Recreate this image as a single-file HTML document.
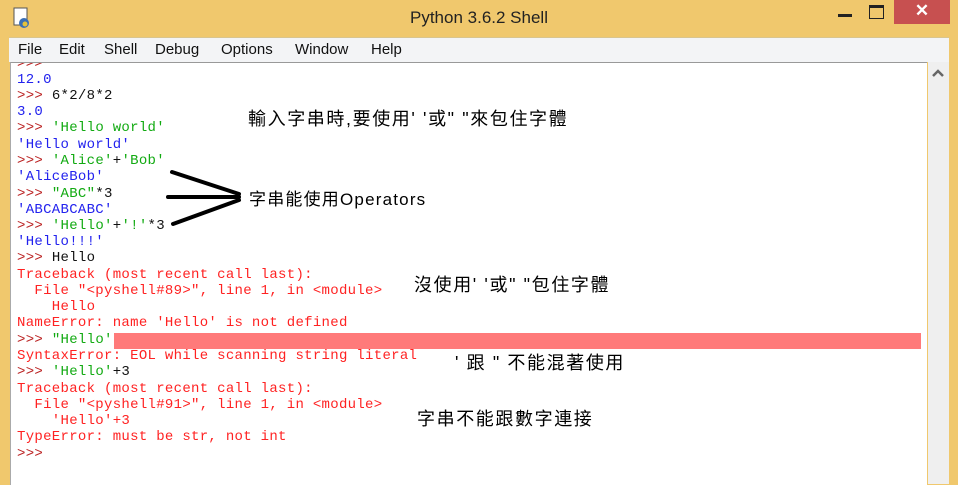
<!DOCTYPE html>
<html><head><meta charset="utf-8"><style>
body{margin:0;width:958px;height:484px;overflow:hidden;background:#F0C86D;position:relative;font-family:"Liberation Sans","Noto Sans CJK TC",sans-serif}
.title{position:absolute;left:0;top:0;width:958px;height:37px;text-align:center;line-height:36px;font-size:17px;color:#222}
.menu{position:absolute;left:9px;top:37px;width:940px;height:24px;background:#F3F4F6;border-top:1px solid #d9c58e}
.menu span{position:absolute;top:3px;font-size:15px;color:#111}
.text{position:absolute;left:10px;top:62px;width:916px;height:422px;background:#fff;border-left:1px solid #aaa;border-top:1px solid #999;overflow:hidden}
.scroll{position:absolute;left:928px;top:62px;width:21px;height:422px;background:#EFEFEF}
.l{position:absolute;left:6px;font-family:"Liberation Mono",monospace;font-size:14px;letter-spacing:0.3px;white-space:pre;line-height:16px}
.p{color:#B22}.b{color:#22E}.g{color:#1A1}.k{color:#111}.r{color:#F22}
.note{position:absolute;font-size:18px;letter-spacing:1.6px;color:#000;white-space:pre;font-family:"Liberation Sans","WenQuanYi Zen Hei",sans-serif}
</style></head><body>
<div class="title">Python 3.6.2 Shell</div>
<svg style="position:absolute;left:12px;top:7px" width="20" height="22"><rect x="2" y="1" width="13" height="17" fill="#fff" stroke="#555"/><circle cx="12" cy="16" r="5" fill="#3a6fb5"/><circle cx="13" cy="17" r="2.5" fill="#e5c33a"/></svg>
<div style="position:absolute;left:838px;top:14px;width:14px;height:3px;background:#222"></div>
<div style="position:absolute;left:869px;top:5px;width:13px;height:10px;border:1px solid #222;border-top:3px solid #222"></div>
<div style="position:absolute;left:894px;top:0;width:56px;height:24px;background:#C75050;color:#fff;text-align:center;font-size:17px;font-weight:bold;line-height:22px">✕</div>
<div class="menu"><span style="left:9px">File</span><span style="left:50px">Edit</span><span style="left:95px">Shell</span><span style="left:146px">Debug</span><span style="left:212px">Options</span><span style="left:286px">Window</span><span style="left:362px">Help</span></div>
<div class="text">
<div class="l p" style="top:-7px">&gt;&gt;&gt;</div>
<div class="l b" style="top:9px">12.0</div>
<div class="l" style="top:25px"><span class="p">&gt;&gt;&gt;</span> <span class="k">6*2/8*2</span></div>
<div class="l b" style="top:41px">3.0</div>
<div class="l" style="top:57px"><span class="p">&gt;&gt;&gt;</span> <span class="g">'Hello world'</span></div>
<div class="l b" style="top:74px">'Hello world'</div>
<div class="l" style="top:90px"><span class="p">&gt;&gt;&gt;</span> <span class="g">'Alice'</span><span class="k">+</span><span class="g">'Bob'</span></div>
<div class="l b" style="top:106px">'AliceBob'</div>
<div class="l" style="top:123px"><span class="p">&gt;&gt;&gt;</span> <span class="g">"ABC"</span><span class="k">*3</span></div>
<div class="l b" style="top:139px">'ABCABCABC'</div>
<div class="l" style="top:155px"><span class="p">&gt;&gt;&gt;</span> <span class="g">'Hello'</span><span class="k">+</span><span class="g">'!'</span><span class="k">*3</span></div>
<div class="l b" style="top:171px">'Hello!!!'</div>
<div class="l" style="top:187px"><span class="p">&gt;&gt;&gt;</span> <span class="k">Hello</span></div>
<div class="l r" style="top:204px">Traceback (most recent call last):</div>
<div class="l r" style="top:220px">  File "&lt;pyshell#89&gt;", line 1, in &lt;module&gt;</div>
<div class="l r" style="top:236px">    Hello</div>
<div class="l r" style="top:252px">NameError: name 'Hello' is not defined</div>
<div style="position:absolute;left:103px;top:270px;width:807px;height:16px;background:#FF7A7A"></div>
<div class="l" style="top:269px"><span class="p">&gt;&gt;&gt;</span> <span class="g">"Hello'</span></div>
<div class="l r" style="top:285px">SyntaxError: EOL while scanning string literal</div>
<div class="l" style="top:301px"><span class="p">&gt;&gt;&gt;</span> <span class="g">'Hello'</span><span class="k">+3</span></div>
<div class="l r" style="top:318px">Traceback (most recent call last):</div>
<div class="l r" style="top:334px">  File "&lt;pyshell#91&gt;", line 1, in &lt;module&gt;</div>
<div class="l r" style="top:350px">    'Hello'+3</div>
<div class="l r" style="top:366px">TypeError: must be str, not int</div>
<div class="l p" style="top:383px">&gt;&gt;&gt;</div>
</div>
<div class="scroll"><svg width="21" height="20"><path d="M5 14 L10 9 L15 14" stroke="#666" stroke-width="2.5" fill="none"/></svg></div>
<svg style="position:absolute;left:0;top:0" width="958" height="484"><g stroke="#000" stroke-width="4" stroke-linecap="round"><line x1="172" y1="172" x2="239" y2="194"/><line x1="168" y1="197" x2="239" y2="197"/><line x1="173" y1="224" x2="239" y2="200"/></g></svg>
<div class="note" style="left:248px;top:105px">輸入字串時,要使用' '或" "來包住字體</div>
<div class="note" style="left:249px;top:185px;font-size:17px;letter-spacing:1.2px">字串能使用Operators</div>
<div class="note" style="left:414px;top:271px">沒使用' '或" "包住字體</div>
<div class="note" style="left:455px;top:349px">' 跟 " 不能混著使用</div>
<div class="note" style="left:417px;top:405px">字串不能跟數字連接</div>
</body></html>
